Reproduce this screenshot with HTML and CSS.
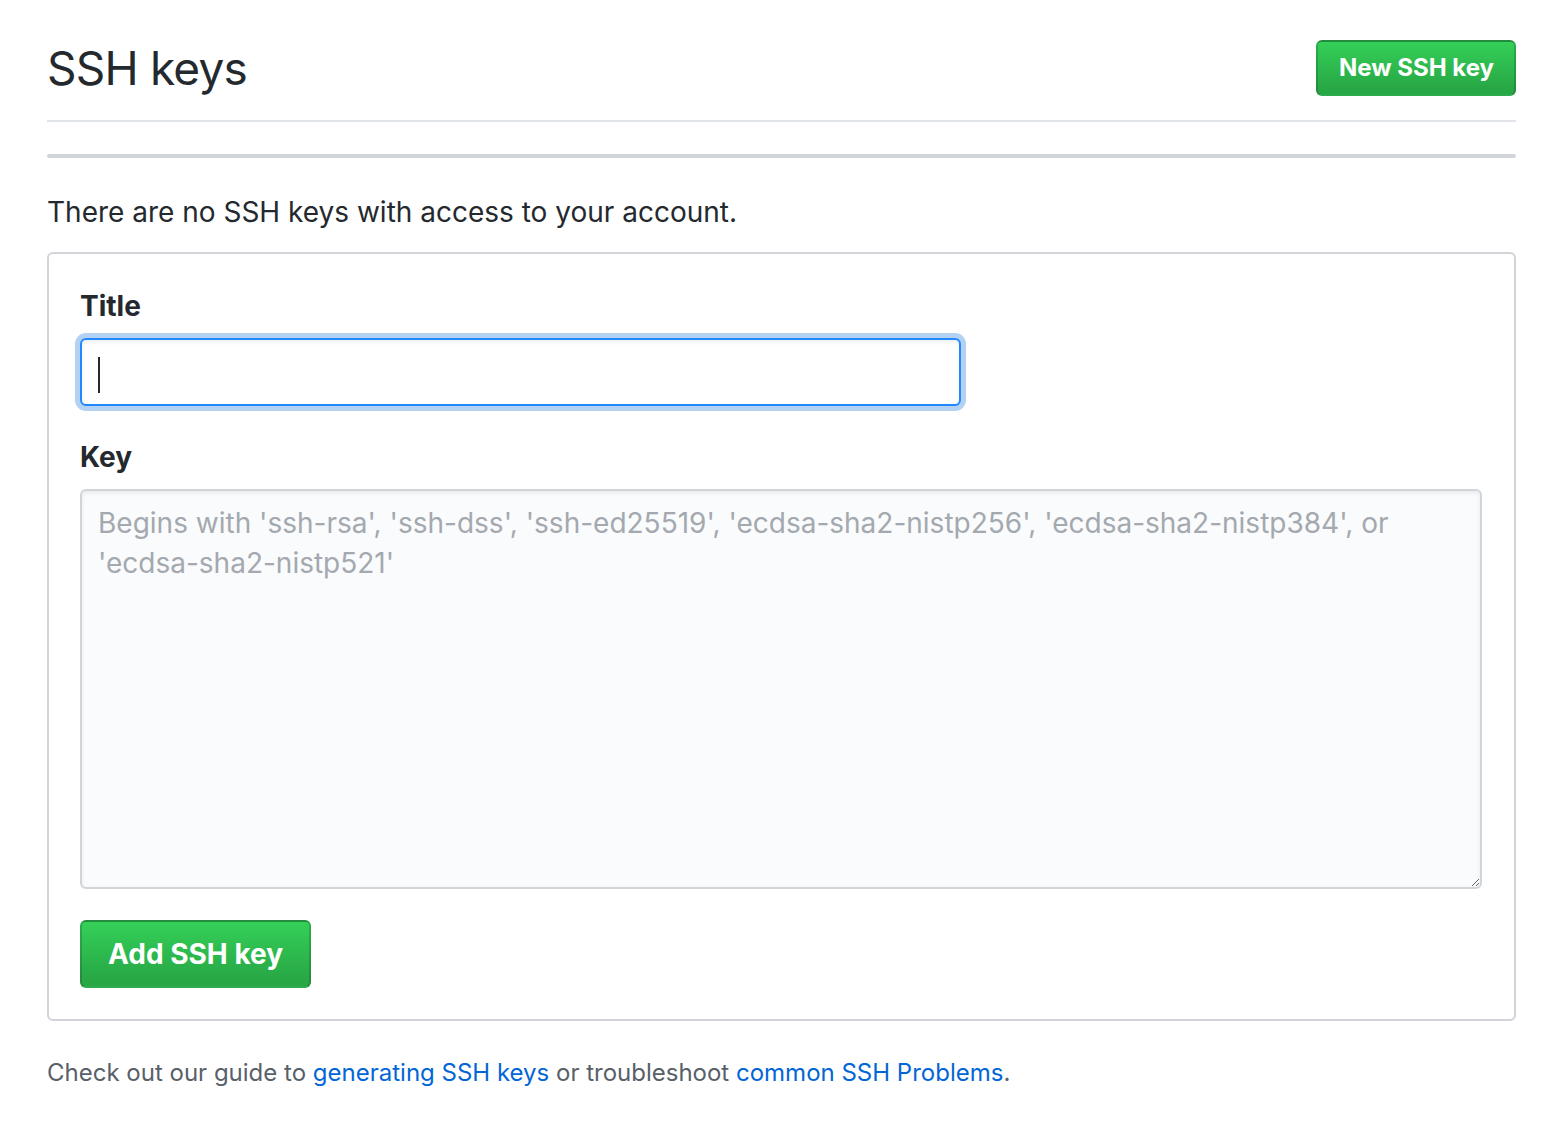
FILE: index.html
```html
<!DOCTYPE html>
<html lang="en">
<head>
    <meta charset="UTF-8">
    <title>SSH keys</title>
    <link rel="stylesheet" href="styles.css">
</head>
<body>
<div class="page">
    <div class="subhead">
        <h2 class="subhead-heading">SSH keys</h2>
        <a class="btn btn-sm btn-primary" href="#new">New SSH key</a>
    </div>
    <div class="empty-list"></div>
    <p class="blankslate">There are no SSH keys with access to your account.</p>

    <form class="box" id="new">
        <div class="form-group">
            <label class="form-label">Title</label>
            <div class="form-control title-input focus"><span class="caret"></span></div>
        </div>
        <div class="form-group">
            <label class="form-label" for="key">Key</label>
            <textarea class="form-control key-input" id="key" placeholder="Begins with 'ssh-rsa', 'ssh-dss', 'ssh-ed25519', 'ecdsa-sha2-nistp256', 'ecdsa-sha2-nistp384', or 'ecdsa-sha2-nistp521'"></textarea>
        </div>
        <button class="btn btn-primary" type="submit">Add SSH key</button>
    </form>

    <p class="help">Check out our guide to <a href="#">generating SSH keys</a> or troubleshoot <a href="#">common SSH Problems</a>.</p>
</div>
</body>
</html>
```

FILE: styles.css
```css
* {
    margin: 0;
    padding: 0;
    box-sizing: border-box;
}
body {
    background: #fff;
    color: #24292e;
    font-family: Inter, "Noto Sans", sans-serif;
}
.page {
    padding: 32px 50px 0 47px;
}
.subhead {
    display: flex;
    align-items: center;
    height: 90px;
    padding-bottom: 16px;
    border-bottom: 2px solid #e1e4e8;
}
.subhead-heading {
    flex: 1;
    font-size: 46px;
    font-weight: 400;
    line-height: 74px;
    letter-spacing: -0.8px;
}
.btn {
    display: inline-block;
    font-family: inherit;
    font-weight: 700;
    text-decoration: none;
    color: #fff;
    border: 2px solid rgba(27, 31, 35, 0.2);
    border-radius: 6px;
    cursor: pointer;
}
.btn-primary {
    background-image: linear-gradient(-180deg, #34d058 0%, #28a745 90%);
    background-color: #28a745;
}
.btn-sm {
    height: 56px;
    padding: 0 20px 0 21px;
    font-size: 24px;
    line-height: 52px;
}
.box .btn {
    height: 68px;
    padding: 0 26px;
    font-size: 28px;
    line-height: 64px;
}
.empty-list {
    margin-top: 32px;
    height: 4px;
    border-top: 2px solid #d1d5da;
    border-bottom: 2px solid #d1d5da;
    border-radius: 4px;
}
.blankslate {
    margin: 33px 0 19px;
    font-size: 28px;
    line-height: 42px;
}
.box {
    border: 2px solid #d1d5da;
    border-radius: 6px;
    padding: 32px 31px 31px;
}
.form-group {
    margin-bottom: 31px;
}
.form-label {
    display: block;
    font-size: 28px;
    font-weight: 700;
    line-height: 40px;
    margin-bottom: 12px;
}
.form-control {
    display: block;
    font-family: inherit;
    font-size: 28px;
    line-height: 40px;
    color: #24292e;
    border: 2px solid #d1d5da;
    border-radius: 6px;
    box-shadow: inset 0 2px 4px rgba(27, 31, 35, 0.075);
    outline: none;
}
.title-input {
    width: 881px;
    height: 68px;
    padding: 14px 16px;
    background: #fff;
}
.title-input.focus {
    border-color: #2188ff;
    box-shadow: inset 0 2px 4px rgba(27, 31, 35, 0.075), 0 0 0 5px rgba(3, 102, 214, 0.3);
}
.caret {
    display: inline-block;
    width: 2px;
    height: 36px;
    margin-top: 3px;
    background: #24292e;
}
.key-input {
    width: 1402px;
    height: 400px;
    padding: 12px 16px;
    background: #fafbfc;
    resize: vertical;
}
.key-input::placeholder {
    color: #a3a9af;
}
.help {
    margin-top: 32px;
    font-size: 24px;
    line-height: 40px;
    color: #586069;
}
.help a {
    color: #0366d6;
    text-decoration: none;
}
```
